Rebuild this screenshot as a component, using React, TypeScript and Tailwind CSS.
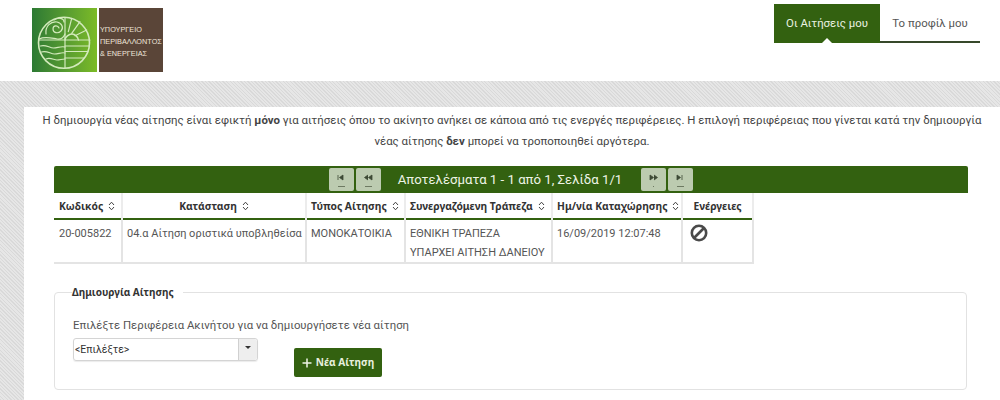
import React from "react";

function Sort() {
  return (
    <svg width="7" height="10" viewBox="0 0 7 10" className="inline-block ml-[5px] align-[-1px]" fill="none" stroke="#444" strokeWidth="1">
      <path d="M1 4 L3.5 1.2 L6 4" />
      <path d="M1 6 L3.5 8.8 L6 6" />
    </svg>
  );
}

function Emblem() {
  return (
    <svg width="65" height="64" viewBox="0 0 65 64" fill="none" stroke="#d3eabc" strokeWidth="1.200" strokeLinecap="round">
      <circle cx="32" cy="34.800" r="25.500" strokeWidth="1.600" />
      <path d="M33 9.500V60" />
      <path d="M7 32H58" />
      <path d="M33 32c0-3 4-6 7-6s6 3 6.500 6" strokeWidth="1.500" />
      <path d="M36.300 23.700L39.700 10.300M39.700 25.300L48 13.700M43 27.700L54.700 22" />
      <path d="M33 38H57.500M33 43.500H56M33 50H52" />
      <path d="M8.500 38c5-2 9 2 13 2s7-2 11.500-1M9.500 44c5-2 9 2 13 2s7-2 10.500-1M14 51c4-2 8 1 11 1s5-1 8-1" />
      <path d="M7 31c6-3 12-1 18 0s7-3 8-5" />
      <path d="M14 26c-1-8 5-13 11-12 5 1 7 6 4 9-3 3-8 2-8-2s5-4 6-1" />
      <path d="M22 12c4-3 10-2 10 2" />
    </svg>
  );
}

function PagerIcon({ kind }: { kind: "first" | "prev" | "next" | "last" }) {
  const paths: Record<string, string> = {
    first: "M3 2v5M8 2 L4.500 4.500 L8 7Z",
    prev: "M6 2 L2.500 4.500 L6 7M10 2 L6.500 4.500 L10 7Z",
    next: "M2 2 L5.500 4.500 L2 7ZM6 2 L9.500 4.500 L6 7",
    last: "M2 2 L5.500 4.500 L2 7ZM7 2v5",
  };
  return (
    <svg width="12" height="9" viewBox="0 0 12 9" fill="#3d4a35" stroke="#3d4a35" strokeWidth="0.8">
      <path d={paths[kind]} />
    </svg>
  );
}

function PagerButton({ kind }: { kind: "first" | "prev" | "next" | "last" }) {
  return (
    <div className="w-[25px] h-[23px] bg-[#bccbb0] rounded-[2px] flex flex-col items-center pt-[5px] gap-[4px]">
      <PagerIcon kind={kind} />
      <div className={kind === "next" ? "w-[1px] h-[1px] bg-[#6d7a62]" : "w-[7px] h-[1px] bg-[#6d7a62]"} />
    </div>
  );
}

const th = "border-r-2 border-[#ececec] font-bold text-[10.300px] leading-[14px] text-[#333] pl-[4px] pr-[4px] pt-[6px] h-[26px] align-top whitespace-nowrap";
const td = "border-r-2 border-[#e4e4e4] text-[11px] text-[#555] pl-[4px] pr-[4px] align-top leading-[19px] pt-[4px]";

export default function App() {
  return (
    <div className="w-[1000px] h-[400px] overflow-hidden bg-white font-['Roboto','Noto_Sans',sans-serif] text-[#444]">
      <header className="h-[81px] flex justify-between pl-[32px] pr-[20px]">
        <div className="flex items-start pt-[8px] gap-[2px]">
          <div className="w-[65px] h-[64px] bg-gradient-to-r from-[#2c7a33] to-[#7cbb26]">
            <Emblem />
          </div>
          <div className="w-[64px] h-[64px] bg-[#5a4538] flex flex-col justify-center pl-[1px] pt-[3px] text-[#efe6da] text-[7.300px] leading-[12px] font-['Liberation_Sans',sans-serif] whitespace-nowrap">
            <span>ΥΠΟΥΡΓΕΙΟ</span>
            <span>ΠΕΡΙΒΑΛΛΟΝΤΟΣ</span>
            <span>&amp; ΕΝΕΡΓΕΙΑΣ</span>
          </div>
        </div>
        <nav className="flex items-start pt-[4px]">
          <div className="relative w-[106px] h-[39px] bg-[#336110] text-[#eaf2e2] text-[11.400px] flex items-center justify-center">
            Οι Αιτήσεις μου
            <span className="absolute bottom-0 left-[48px] w-0 h-0 border-x-[5px] border-x-transparent border-b-[5px] border-b-white" />
          </div>
          <div className="w-[100px] h-[39px] border-b-2 border-[#36482a] text-[11.400px] text-[#555] flex items-center justify-center pt-[3px]">
            Το προφίλ μου
          </div>
        </nav>
      </header>

      <main className="h-[319px] bg-[repeating-linear-gradient(45deg,#d9d9d9_0,#d9d9d9_1px,#e6e6e6_1px,#e6e6e6_2.500px)] pt-[26px] pl-[24px]">
        <section className="h-[293px] bg-white pt-[2px]">
          <p className="w-[976px] px-[12px] text-center text-[11.450px] leading-[21px] text-[#444] pt-[1px]">
            Η δημιουργία νέας αίτησης είναι εφικτή <b>μόνο</b> για αιτήσεις όπου το ακίνητο ανήκει σε κάποια από τις ενεργές περιφέρειες. Η επιλογή περιφέρειας που γίνεται κατά την δημιουργία νέας αίτησης <b>δεν</b> μπορεί να τροποποιηθεί αργότερα.
          </p>

          <div className="ml-[30px] mt-[14px] w-[914px]">
            <div className="h-[27px] bg-[#336110] rounded-t-[2px] flex items-center justify-center gap-[2px]">
              <PagerButton kind="first" />
              <PagerButton kind="prev" />
              <span className="text-[#eef4e6] text-[13.200px] ml-[15px] mr-[17px] whitespace-nowrap">Αποτελέσματα 1 - 1 από 1, Σελίδα 1/1</span>
              <PagerButton kind="next" />
              <PagerButton kind="last" />
            </div>
            <table className="table-fixed border-collapse w-[699px] border-b-2 border-[#e4e4e4] font-['Noto_Sans','Roboto',sans-serif]">
              <thead>
                <tr className="border-b-[2px] border-[#336110]">
                  <th className={`${th} w-[68px] text-left pl-[5px]`}>Κωδικός<Sort /></th>
                  <th className={`${th} w-[184px] text-center`}>Κατάσταση<Sort /></th>
                  <th className={`${th} w-[99px] text-left`}>Τύπος Αίτησης<Sort /></th>
                  <th className={`${th} w-[147px] text-left`}>Συνεργαζόμενη Τράπεζα<Sort /></th>
                  <th className={`${th} w-[130px] text-left`}>Ημ/νία Καταχώρησης<Sort /></th>
                  <th className={`${th} w-[71px] text-center`}>Ενέργειες</th>
                </tr>
              </thead>
              <tbody className="font-['Roboto',sans-serif]">
                <tr className="h-[43px]">
                  <td className={`${td} pl-[5px]`}>20-005822</td>
                  <td className={`${td} whitespace-nowrap`}>04.α Αίτηση οριστικά υποβληθείσα</td>
                  <td className={td}>ΜΟΝΟΚΑΤΟΙΚΙΑ</td>
                  <td className={`${td} whitespace-nowrap`}>ΕΘΝΙΚΗ ΤΡΑΠΕΖΑ<br />ΥΠΑΡΧΕΙ ΑΙΤΗΣΗ ΔΑΝΕΙΟΥ</td>
                  <td className={`${td} whitespace-nowrap`}>16/09/2019 12:07:48</td>
                  <td className={td}>
                    <svg width="18" height="18" viewBox="0 0 18 18" fill="none" stroke="#4a4a4a" strokeWidth="2.600" className="mt-[0px] ml-[3px]">
                      <circle cx="9" cy="9" r="7.200" />
                      <path d="M4 14 L14 4" />
                    </svg>
                  </td>
                </tr>
              </tbody>
            </table>
          </div>

          <fieldset className="ml-[30px] mt-[21px] w-[913px] h-[105px] border border-[#e2e2e2] rounded-[4px] pl-[18px] pr-[18px]">
            <legend className="text-[10px] font-bold text-[#333] pr-[9px] -ml-[1px] font-['Noto_Sans',sans-serif] leading-[14px]">Δημιουργία Αίτησης</legend>
            <div className="text-[11.400px] text-[#555] mt-[18px] leading-[16px]">Επιλέξτε Περιφέρεια Ακινήτου για να δημιουργήσετε νέα αίτηση</div>
            <div className="flex items-start mt-[5px]">
              <div className="w-[185px] h-[23px] border border-[#d4d4d4] rounded-[3px] flex items-center text-[10.500px] text-[#333] pl-[1px] shadow-[0_1px_1px_rgba(0,0,0,0.08)]">
                <span className="flex-1">&lt;Επιλέξτε&gt;</span>
                <span className="w-[19px] h-full bg-[#eeeeee] border-l border-[#d0d0d0] rounded-r-[3px] flex justify-center pt-[7px]">
                  <span className="w-0 h-0 border-x-[3px] border-x-transparent border-t-[3px] border-t-[#333]" />
                </span>
              </div>
              <button className="ml-[36px] mt-[10px] w-[88px] h-[29px] bg-[#336110] rounded-[2px] text-[#e8f0de] text-[10.100px] font-bold font-['Noto_Sans',sans-serif] flex items-center justify-center gap-[4px]">
                <svg width="10" height="10" viewBox="0 0 10 10" stroke="#eef4e6" strokeWidth="1.500"><path d="M5 0.500V9.500M0.500 5H9.500" /></svg>
                Νέα Αίτηση
              </button>
            </div>
          </fieldset>
        </section>
      </main>
    </div>
  );
}
